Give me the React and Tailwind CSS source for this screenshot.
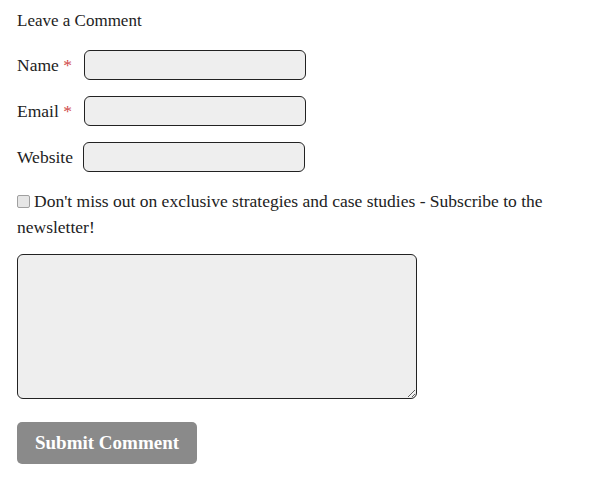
export default function App() {
  return (
    <div className="min-h-screen bg-white px-[17px] pt-[11px] text-[17.5px] leading-[26px] text-[#222]" style={{ fontFamily: '"Liberation Serif", Georgia, serif' }}>
      <h3 className="text-[17px] leading-[20px]">Leave a Comment</h3>

      <form className="mt-[19px] flex flex-col">
        <div className="flex items-center">
          <label className="w-[67px]">
            Name <span className="text-[#d04a4a]">*</span>
          </label>
          <input className="h-[30px] w-[222px] rounded-[6px] border border-[#222] bg-[#eeeeee]" />
        </div>
        <div className="mt-[16px] flex items-center">
          <label className="w-[67px]">
            Email <span className="text-[#d04a4a]">*</span>
          </label>
          <input className="h-[30px] w-[222px] rounded-[6px] border border-[#222] bg-[#eeeeee]" />
        </div>
        <div className="mt-[16px] flex items-center">
          <label className="w-[66px]">Website</label>
          <input className="h-[30px] w-[222px] rounded-[6px] border border-[#222] bg-[#eeeeee]" />
        </div>

        <p className="mt-[16px]">
          <input
            type="checkbox"
            className="mr-[4px] h-[13px] w-[13px] appearance-none rounded-[2px] border border-[#a0a0a0] bg-[#e6e6e6] align-[-1px]"
          />
          Don't miss out on exclusive strategies and case studies - Subscribe to the newsletter!
        </p>

        <textarea className="mt-[14px] h-[145px] w-[400px] rounded-[6px] border border-[#222] bg-[#eeeeee]" />

        <div className="mt-[23px]">
          <button type="button" className="h-[42px] w-[180px] rounded-[5px] bg-[#8a8a8a] text-[19px] font-bold text-white">
            Submit Comment
          </button>
        </div>
      </form>
    </div>
  );
}
